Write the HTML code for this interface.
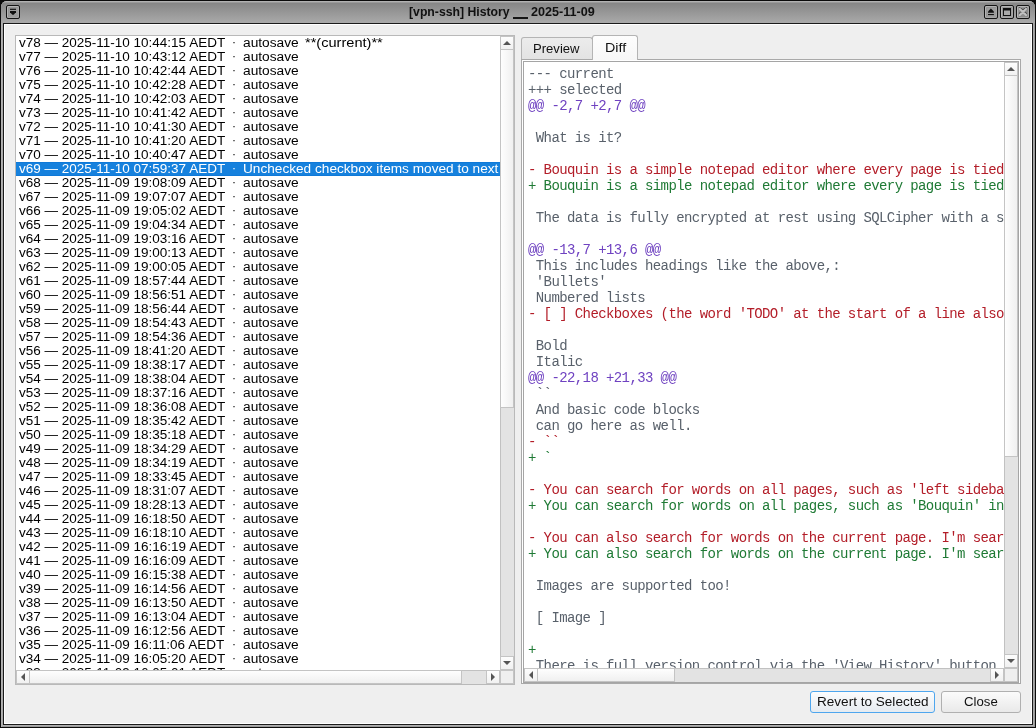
<!DOCTYPE html>
<html><head><meta charset="utf-8">
<style>
*{box-sizing:border-box}
html,body{margin:0;padding:0}
body{width:1036px;height:728px;overflow:hidden;position:relative;background:#0b0b0b;font-family:"Liberation Sans",sans-serif}
.abs{position:absolute}
.t{position:absolute;white-space:nowrap;transform-origin:0 0}
#frame{position:absolute;left:1px;top:1px;width:1034px;height:726px;background:#a8a8a8;border-radius:6px 6px 0 0;box-shadow:inset 1px 0 0 #b2b2b2, inset -1px 0 0 #9a9a9a}
#title{position:absolute;left:1px;top:1px;width:1034px;height:22px;border-radius:6px 6px 0 0;
 background:linear-gradient(to bottom,#b4b4b4 0px,#b0b0b0 1px,#9a9a9a 1.5px,#878787 2.5px,#8a8a8a 4px,#a6a6a6 20px,#a9a9a9 22px)}
#body{position:absolute;left:3px;top:23px;width:1030px;height:702px;border:1px solid #1a1a1a;background:#efefef;
 box-shadow:inset 1px 1px 0 #fff, inset -1px -1px 0 #fff}
#bottomgrey{position:absolute;left:2px;top:725px;width:1032px;height:2px;background:linear-gradient(to bottom,#b0b0b0 0 1px,#9a9a9a 1px 2px)}
.tbtn{position:absolute;top:5px;width:14px;height:14px;border:1px solid #151515;border-radius:2px;background:#9c9c9c;
 box-shadow:inset 1px 1px 0 #b4b4b4, inset -1px -1px 0 #a6a6a6, inset 2px 2px 0 #959595}
.ttext{position:absolute;top:4px;left:0;width:1036px;text-align:center;font-weight:bold;font-size:12px;color:#111;line-height:15px}
.ttext span{display:inline-block;transform-origin:50% 50%}

/* list */
#list{position:absolute;left:15px;top:35px;width:500px;height:650px;border:1px solid #b9b9b9;background:#fff;overflow:hidden}
#rows{position:absolute;left:0;top:0;width:484px;height:634px;overflow:hidden}
.row{position:absolute;left:0;width:484px;height:14px;font-size:12px;line-height:14px;color:#000;white-space:nowrap}
.row span{position:absolute;top:0}
.row.sel{background:#1681dd;color:#fff;box-shadow:inset 0 1px 0 #0f79d8, inset 0 -1px 0 #0f79d8}
.la{left:3px;transform:scaleX(1.125);transform-origin:0 0}
.lb{left:216px;top:-1px!important}
.lc{left:227px;transform:scaleX(1.145);transform-origin:0 0}
.lsel{transform:scaleX(1.136)!important}
.ld{left:289px;transform:scaleX(1.215);transform-origin:0 0}

.vsb{position:absolute;background:#e3e3e3;border-left:1px solid #c1c1c1}
.hsb{position:absolute;background:#e3e3e3;border-top:1px solid #c1c1c1}
.sbtn{position:absolute;background:linear-gradient(to bottom,#fdfdfd,#f1f1f1);border:1px solid #c4c4c4}
.vh{position:absolute;background:linear-gradient(to right,#fefefe,#f0f0f0);border:1px solid #c4c4c4}
.hh{position:absolute;background:linear-gradient(to bottom,#fefefe,#f0f0f0);border:1px solid #c4c4c4}
.corner{position:absolute;background:#efefef;border:1px solid #c4c4c4}
.tri{position:absolute;width:0;height:0}

/* tabs */
.tab{position:absolute;border:1px solid #b4b4b4;border-bottom:none;border-radius:3px 3px 0 0;font-size:12px;color:#111;text-align:center}
#pane{position:absolute;left:521px;top:59px;width:500px;height:625px;border:1px solid #a9a9a9;background:#efefef;box-shadow:inset 1px 1px 0 #fff, inset -1px 0 0 #fff}
#te{position:absolute;left:523px;top:61px;width:496px;height:622px;border:1px solid #a5a5a5;background:#fff;overflow:hidden}
#dtext{position:absolute;left:0;top:0;width:480px;height:606px;overflow:hidden}
.dl{position:absolute;left:4px;font-family:"Liberation Mono",monospace;font-size:14px;letter-spacing:-0.6px;line-height:16px;white-space:pre;height:16px}
.dh,.dc{color:#59616b}
.da{color:#6f42c1}
.dm{color:#b31d28}
.dp{color:#1f7a35}

.btn{position:absolute;border:1px solid #b0b0b0;border-radius:3px;background:linear-gradient(to bottom,#fbfbfb,#e9e9e9);font-size:12px;color:#111;text-align:center;line-height:19px}
</style></head><body>
<div id="root" style="position:absolute;left:0;top:0;width:1036px;height:728px;overflow:hidden;will-change:transform">
<div id="frame"></div>
<div id="title"></div>
<div id="bottomgrey"></div>
<div id="body"></div>

<!-- title buttons -->
<div class="tbtn" style="left:6px">
 <svg class="abs" style="left:-1px;top:-1px" width="14" height="14"><rect x="4" y="3.7" width="6" height="1.2" fill="#111"/><path d="M4 6 H10 V7.3 L7.6 9.8 H6.4 L4 7.3Z" fill="#111"/></svg>
</div>
<div class="tbtn" style="left:984px">
 <svg class="abs" style="left:-1px;top:-1px" width="14" height="14"><path d="M4 7.8 V6.4 L6.9 3.5 L9.9 6.4 V7.8 Z" fill="#111"/><rect x="4" y="9" width="5.9" height="1.1" fill="#111"/></svg>
</div>
<div class="tbtn" style="left:1000px">
 <svg class="abs" style="left:-1px;top:-1px" width="14" height="14"><rect x="3.5" y="3.5" width="7" height="7" fill="#a8a8a8" stroke="#111" stroke-width="1"/><rect x="3" y="3" width="8" height="2.5" fill="#111"/></svg>
</div>
<div class="tbtn" style="left:1016px;background:radial-gradient(circle at 50% 50%,#9a9a9a,#7e7e7e)">
 <svg class="abs" style="left:-1px;top:-1px" width="14" height="14"><path d="M2.8 2.4 L6.9 4.6 L11 2.4 M2.8 8.6 L4.6 7.1 M9.2 7.1 L11 8.6" stroke="#3a3a3a" stroke-width="1" fill="none"/><path d="M3.8 3.9 L10 10.1 M10 3.9 L3.8 10.1" stroke="#c2c2c2" stroke-width="2" stroke-linecap="round"/></svg>
</div>
<div class="t" style="left:409px;top:5px;font-weight:bold;font-size:12px;line-height:15px;color:#111;transform:scaleX(1.02)">[vpn-ssh] History</div>
<div class="abs" style="left:513px;top:17px;width:15px;height:1.5px;background:#151515"></div>
<div class="t" style="left:531px;top:5px;font-weight:bold;font-size:12px;line-height:15px;color:#111;transform:scaleX(1.05)">2025-11-09</div>

<!-- list -->
<div id="list">
 <div id="rows">
<div class="row" style="top:0px"><span class="la">v78 — 2025-11-10 10:44:15 AEDT</span><span class="lb">·</span><span class="lc">autosave</span><span class="ld">**(current)**</span></div>
<div class="row" style="top:14px"><span class="la">v77 — 2025-11-10 10:43:12 AEDT</span><span class="lb">·</span><span class="lc">autosave</span></div>
<div class="row" style="top:28px"><span class="la">v76 — 2025-11-10 10:42:44 AEDT</span><span class="lb">·</span><span class="lc">autosave</span></div>
<div class="row" style="top:42px"><span class="la">v75 — 2025-11-10 10:42:28 AEDT</span><span class="lb">·</span><span class="lc">autosave</span></div>
<div class="row" style="top:56px"><span class="la">v74 — 2025-11-10 10:42:03 AEDT</span><span class="lb">·</span><span class="lc">autosave</span></div>
<div class="row" style="top:70px"><span class="la">v73 — 2025-11-10 10:41:42 AEDT</span><span class="lb">·</span><span class="lc">autosave</span></div>
<div class="row" style="top:84px"><span class="la">v72 — 2025-11-10 10:41:30 AEDT</span><span class="lb">·</span><span class="lc">autosave</span></div>
<div class="row" style="top:98px"><span class="la">v71 — 2025-11-10 10:41:20 AEDT</span><span class="lb">·</span><span class="lc">autosave</span></div>
<div class="row" style="top:112px"><span class="la">v70 — 2025-11-10 10:40:47 AEDT</span><span class="lb">·</span><span class="lc">autosave</span></div>
<div class="row sel" style="top:126px"><span class="la">v69 — 2025-11-10 07:59:37 AEDT</span><span class="lb">·</span><span class="lc lsel">Unchecked checkbox items moved to next</span></div>
<div class="row" style="top:140px"><span class="la">v68 — 2025-11-09 19:08:09 AEDT</span><span class="lb">·</span><span class="lc">autosave</span></div>
<div class="row" style="top:154px"><span class="la">v67 — 2025-11-09 19:07:07 AEDT</span><span class="lb">·</span><span class="lc">autosave</span></div>
<div class="row" style="top:168px"><span class="la">v66 — 2025-11-09 19:05:02 AEDT</span><span class="lb">·</span><span class="lc">autosave</span></div>
<div class="row" style="top:182px"><span class="la">v65 — 2025-11-09 19:04:34 AEDT</span><span class="lb">·</span><span class="lc">autosave</span></div>
<div class="row" style="top:196px"><span class="la">v64 — 2025-11-09 19:03:16 AEDT</span><span class="lb">·</span><span class="lc">autosave</span></div>
<div class="row" style="top:210px"><span class="la">v63 — 2025-11-09 19:00:13 AEDT</span><span class="lb">·</span><span class="lc">autosave</span></div>
<div class="row" style="top:224px"><span class="la">v62 — 2025-11-09 19:00:05 AEDT</span><span class="lb">·</span><span class="lc">autosave</span></div>
<div class="row" style="top:238px"><span class="la">v61 — 2025-11-09 18:57:44 AEDT</span><span class="lb">·</span><span class="lc">autosave</span></div>
<div class="row" style="top:252px"><span class="la">v60 — 2025-11-09 18:56:51 AEDT</span><span class="lb">·</span><span class="lc">autosave</span></div>
<div class="row" style="top:266px"><span class="la">v59 — 2025-11-09 18:56:44 AEDT</span><span class="lb">·</span><span class="lc">autosave</span></div>
<div class="row" style="top:280px"><span class="la">v58 — 2025-11-09 18:54:43 AEDT</span><span class="lb">·</span><span class="lc">autosave</span></div>
<div class="row" style="top:294px"><span class="la">v57 — 2025-11-09 18:54:36 AEDT</span><span class="lb">·</span><span class="lc">autosave</span></div>
<div class="row" style="top:308px"><span class="la">v56 — 2025-11-09 18:41:20 AEDT</span><span class="lb">·</span><span class="lc">autosave</span></div>
<div class="row" style="top:322px"><span class="la">v55 — 2025-11-09 18:38:17 AEDT</span><span class="lb">·</span><span class="lc">autosave</span></div>
<div class="row" style="top:336px"><span class="la">v54 — 2025-11-09 18:38:04 AEDT</span><span class="lb">·</span><span class="lc">autosave</span></div>
<div class="row" style="top:350px"><span class="la">v53 — 2025-11-09 18:37:16 AEDT</span><span class="lb">·</span><span class="lc">autosave</span></div>
<div class="row" style="top:364px"><span class="la">v52 — 2025-11-09 18:36:08 AEDT</span><span class="lb">·</span><span class="lc">autosave</span></div>
<div class="row" style="top:378px"><span class="la">v51 — 2025-11-09 18:35:42 AEDT</span><span class="lb">·</span><span class="lc">autosave</span></div>
<div class="row" style="top:392px"><span class="la">v50 — 2025-11-09 18:35:18 AEDT</span><span class="lb">·</span><span class="lc">autosave</span></div>
<div class="row" style="top:406px"><span class="la">v49 — 2025-11-09 18:34:29 AEDT</span><span class="lb">·</span><span class="lc">autosave</span></div>
<div class="row" style="top:420px"><span class="la">v48 — 2025-11-09 18:34:19 AEDT</span><span class="lb">·</span><span class="lc">autosave</span></div>
<div class="row" style="top:434px"><span class="la">v47 — 2025-11-09 18:33:45 AEDT</span><span class="lb">·</span><span class="lc">autosave</span></div>
<div class="row" style="top:448px"><span class="la">v46 — 2025-11-09 18:31:07 AEDT</span><span class="lb">·</span><span class="lc">autosave</span></div>
<div class="row" style="top:462px"><span class="la">v45 — 2025-11-09 18:28:13 AEDT</span><span class="lb">·</span><span class="lc">autosave</span></div>
<div class="row" style="top:476px"><span class="la">v44 — 2025-11-09 16:18:50 AEDT</span><span class="lb">·</span><span class="lc">autosave</span></div>
<div class="row" style="top:490px"><span class="la">v43 — 2025-11-09 16:18:10 AEDT</span><span class="lb">·</span><span class="lc">autosave</span></div>
<div class="row" style="top:504px"><span class="la">v42 — 2025-11-09 16:16:19 AEDT</span><span class="lb">·</span><span class="lc">autosave</span></div>
<div class="row" style="top:518px"><span class="la">v41 — 2025-11-09 16:16:09 AEDT</span><span class="lb">·</span><span class="lc">autosave</span></div>
<div class="row" style="top:532px"><span class="la">v40 — 2025-11-09 16:15:38 AEDT</span><span class="lb">·</span><span class="lc">autosave</span></div>
<div class="row" style="top:546px"><span class="la">v39 — 2025-11-09 16:14:56 AEDT</span><span class="lb">·</span><span class="lc">autosave</span></div>
<div class="row" style="top:560px"><span class="la">v38 — 2025-11-09 16:13:50 AEDT</span><span class="lb">·</span><span class="lc">autosave</span></div>
<div class="row" style="top:574px"><span class="la">v37 — 2025-11-09 16:13:04 AEDT</span><span class="lb">·</span><span class="lc">autosave</span></div>
<div class="row" style="top:588px"><span class="la">v36 — 2025-11-09 16:12:56 AEDT</span><span class="lb">·</span><span class="lc">autosave</span></div>
<div class="row" style="top:602px"><span class="la">v35 — 2025-11-09 16:11:06 AEDT</span><span class="lb">·</span><span class="lc">autosave</span></div>
<div class="row" style="top:616px"><span class="la">v34 — 2025-11-09 16:05:20 AEDT</span><span class="lb">·</span><span class="lc">autosave</span></div>
<div class="row" style="top:630px"><span class="la">v33 — 2025-11-09 16:05:01 AEDT</span><span class="lb">·</span><span class="lc">autosave</span></div>
 </div>
 <!-- vertical scrollbar: x 500..513 (abs) => local 485..498 -->
 <div class="vsb" style="left:484px;top:0;width:14px;height:634px"></div>
 <div class="sbtn" style="left:484px;top:0;width:14px;height:14px"></div>
 <div class="tri" style="left:487px;top:5px;border-left:4px solid transparent;border-right:4px solid transparent;border-bottom:4px solid #555"></div>
 <div class="vh" style="left:484px;top:13px;width:14px;height:359px"></div>
 <div class="sbtn" style="left:484px;top:620px;width:14px;height:14px"></div>
 <div class="tri" style="left:487px;top:625px;border-left:4px solid transparent;border-right:4px solid transparent;border-top:4px solid #555"></div>
 <!-- horizontal scrollbar -->
 <div class="hsb" style="left:0;top:634px;width:484px;height:14px"></div>
 <div class="sbtn" style="left:0;top:634px;width:14px;height:14px"></div>
 <div class="tri" style="left:5px;top:637px;border-top:4px solid transparent;border-bottom:4px solid transparent;border-right:4px solid #555"></div>
 <div class="hh" style="left:13px;top:634px;width:433px;height:14px"></div>
 <div class="sbtn" style="left:470px;top:634px;width:14px;height:14px"></div>
 <div class="tri" style="left:475px;top:637px;border-top:4px solid transparent;border-bottom:4px solid transparent;border-left:4px solid #555"></div>
 <div class="corner" style="left:484px;top:634px;width:14px;height:14px"></div>
</div>

<!-- tabs -->
<div id="pane"></div>
<div class="tab" style="left:521px;top:37px;width:72px;height:22px;background:linear-gradient(to bottom,#ececec,#e3e3e3);line-height:22px"></div>
<div class="tab" style="left:592px;top:35px;width:46px;height:25px;background:linear-gradient(to bottom,#fdfdfd,#f7f7f7);line-height:24px"></div>

<div id="te">
 <div id="dtext">
<div class="dl dh" style="top:4px">--- current</div>
<div class="dl dh" style="top:20px">+++ selected</div>
<div class="dl da" style="top:36px">@@ -2,7 +2,7 @@</div>
<div class="dl dc" style="top:52px"> </div>
<div class="dl dc" style="top:68px"> What is it?</div>
<div class="dl dc" style="top:84px"> </div>
<div class="dl dm" style="top:100px">- Bouquin is a simple notepad editor where every page is tied to a date.</div>
<div class="dl dp" style="top:116px">+ Bouquin is a simple notepad editor where every page is tied to a date!</div>
<div class="dl dc" style="top:132px"> </div>
<div class="dl dc" style="top:148px"> The data is fully encrypted at rest using SQLCipher with a strong key.</div>
<div class="dl dc" style="top:164px"> </div>
<div class="dl da" style="top:180px">@@ -13,7 +13,6 @@</div>
<div class="dl dc" style="top:196px"> This includes headings like the above,:</div>
<div class="dl dc" style="top:212px"> &#x27;Bullets&#x27;</div>
<div class="dl dc" style="top:228px"> Numbered lists</div>
<div class="dl dm" style="top:244px">- [ ] Checkboxes (the word &#x27;TODO&#x27; at the start of a line also works)</div>
<div class="dl dc" style="top:260px"> </div>
<div class="dl dc" style="top:276px"> Bold</div>
<div class="dl dc" style="top:292px"> Italic</div>
<div class="dl da" style="top:308px">@@ -22,18 +21,33 @@</div>
<div class="dl dc" style="top:324px"> ``</div>
<div class="dl dc" style="top:340px"> And basic code blocks</div>
<div class="dl dc" style="top:356px"> can go here as well.</div>
<div class="dl dm" style="top:372px">- ``</div>
<div class="dl dp" style="top:388px">+ `</div>
<div class="dl dc" style="top:404px"> </div>
<div class="dl dm" style="top:420px">- You can search for words on all pages, such as &#x27;left sidebar&#x27; in here.</div>
<div class="dl dp" style="top:436px">+ You can search for words on all pages, such as &#x27;Bouquin&#x27; in here.</div>
<div class="dl dc" style="top:452px"> </div>
<div class="dl dm" style="top:468px">- You can also search for words on the current page. I&#x27;m searching here.</div>
<div class="dl dp" style="top:484px">+ You can also search for words on the current page. I&#x27;m searching here!</div>
<div class="dl dc" style="top:500px"> </div>
<div class="dl dc" style="top:516px"> Images are supported too!</div>
<div class="dl dc" style="top:532px"> </div>
<div class="dl dc" style="top:548px"> [ Image ]</div>
<div class="dl dc" style="top:564px"> </div>
<div class="dl dp" style="top:580px">+</div>
<div class="dl dc" style="top:596px"> There is full version control via the &#x27;View History&#x27; button, too.</div>
 </div>
 <div class="vsb" style="left:480px;top:0;width:14px;height:606px"></div>
 <div class="sbtn" style="left:480px;top:0;width:14px;height:14px"></div>
 <div class="tri" style="left:483px;top:5px;border-left:4px solid transparent;border-right:4px solid transparent;border-bottom:4px solid #555"></div>
 <div class="vh" style="left:480px;top:13px;width:14px;height:382px"></div>
 <div class="sbtn" style="left:480px;top:592px;width:14px;height:14px"></div>
 <div class="tri" style="left:483px;top:597px;border-left:4px solid transparent;border-right:4px solid transparent;border-top:4px solid #555"></div>
 <div class="hsb" style="left:0;top:606px;width:480px;height:14px"></div>
 <div class="sbtn" style="left:0;top:606px;width:14px;height:14px"></div>
 <div class="tri" style="left:5px;top:609px;border-top:4px solid transparent;border-bottom:4px solid transparent;border-right:4px solid #555"></div>
 <div class="hh" style="left:13px;top:606px;width:138px;height:14px"></div>
 <div class="sbtn" style="left:466px;top:606px;width:14px;height:14px"></div>
 <div class="tri" style="left:471px;top:609px;border-top:4px solid transparent;border-bottom:4px solid transparent;border-left:4px solid #555"></div>
 <div class="corner" style="left:480px;top:606px;width:14px;height:14px"></div>
</div>


<div class="btn" style="left:810px;top:691px;width:125px;height:22px;border-color:#4ea6ee;background:linear-gradient(to bottom,#fcfdfe,#e6ebf0)"></div>
<div class="btn" style="left:941px;top:691px;width:80px;height:22px"></div>
<div class="t" style="left:533px;top:42px;font-size:12px;line-height:15px;color:#111;transform:scaleX(1.09)">Preview</div>
<div class="t" style="left:605px;top:41px;font-size:12px;line-height:15px;color:#111;transform:scaleX(1.19)">Diff</div>
<div class="t" style="left:817px;top:695px;font-size:12px;line-height:15px;color:#111;transform:scaleX(1.13)">Revert to Selected</div>
<div class="t" style="left:964px;top:695px;font-size:12px;line-height:15px;color:#111;transform:scaleX(1.1)">Close</div>
</div>
</body></html>
